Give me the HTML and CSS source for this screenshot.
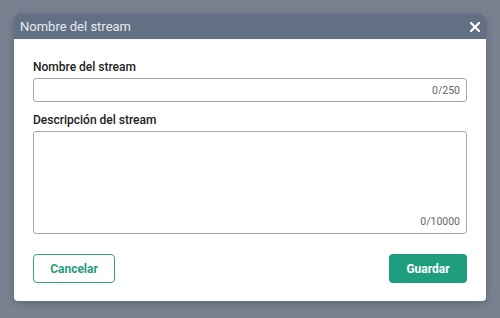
FILE: index.html
```html
<!DOCTYPE html>
<html lang="es">
<head>
  <meta charset="UTF-8" />
  <meta name="viewport" content="width=device-width, initial-scale=1.0"/>
  <title>Nombre del stream</title>
  <link rel="stylesheet" href="styles.css">
</head>
<body>

  <div class="dialog">

    <div class="dialog-header">
      <span class="dialog-title">Nombre del stream</span>
      <button class="close-button" aria-label="Cerrar">
        <svg width="10" height="10" viewBox="0 0 10 10">
          <path d="M1 1 L9 9 M9 1 L1 9" stroke="#ffffff" stroke-width="2.2" stroke-linecap="square" fill="none"/>
        </svg>
      </button>
    </div>

    <div class="dialog-body">

      <div class="field">
        <label class="field-label">Nombre del stream</label>
        <div class="input-box input-box--single">
          <span class="counter">0/250</span>
        </div>
      </div>

      <div class="field">
        <label class="field-label">Descripción del stream</label>
        <div class="input-box input-box--area">
          <span class="counter">0/10000</span>
        </div>
      </div>

      <div class="actions">
        <button class="btn btn--outline">Cancelar</button>
        <button class="btn btn--primary">Guardar</button>
      </div>

    </div>

  </div>

</body>
</html>
```

FILE: styles.css
```css
* {
  box-sizing: border-box;
}

html, body {
  height: 100%;
  margin: 0;
  padding: 0;
  font-family: Roboto, 'Liberation Sans', sans-serif;
  background-color: #7a8291;
  overflow: hidden;
}

body {
  padding: 14px;
}

.dialog {
  width: 472px;
  background-color: #fff;
  border-radius: 4px;
  overflow: hidden;
  box-shadow: 0 2px 8px rgba(40, 46, 58, 0.35);
}

.dialog-header {
  height: 25px;
  background-color: #627084;
  display: flex;
  align-items: center;
  justify-content: space-between;
  padding: 0 6px 0 6px;
}

.dialog-title {
  color: #e8ebef;
  font-size: 13px;
  line-height: 16px;
}

.close-button {
  background: none;
  border: none;
  padding: 0;
  width: 10px;
  height: 10px;
  display: flex;
  cursor: pointer;
}

.dialog-body {
  padding: 20px 19px 18px 19px;
}

.field {
  margin-bottom: 10px;
}

.field-label {
  display: block;
  font-size: 12px;
  line-height: 16px;
  font-weight: 500;
  color: #222;
  margin-bottom: 3px;
}

.input-box {
  border: 1px solid #a9a9a9;
  border-radius: 3px;
  display: flex;
  justify-content: flex-end;
  padding: 0 6px;
}

.input-box--single {
  height: 24px;
  align-items: center;
}

.input-box--area {
  height: 103px;
  align-items: flex-end;
  padding-bottom: 5px;
}

.counter {
  font-size: 10.5px;
  line-height: 13px;
  color: #666;
}

.actions {
  display: flex;
  justify-content: space-between;
  margin-top: 20px;
}

.btn {
  height: 29px;
  border-radius: 4px;
  font-family: Roboto, 'Liberation Sans', sans-serif;
  font-size: 12px;
  font-weight: 700;
  cursor: pointer;
}

.btn--outline {
  width: 82px;
  background: #fff;
  border: 1px solid #3a9e86;
  color: #2a9a7c;
}

.btn--primary {
  width: 78px;
  background-color: #1e9e7f;
  border: none;
  color: #fff;
}
```
